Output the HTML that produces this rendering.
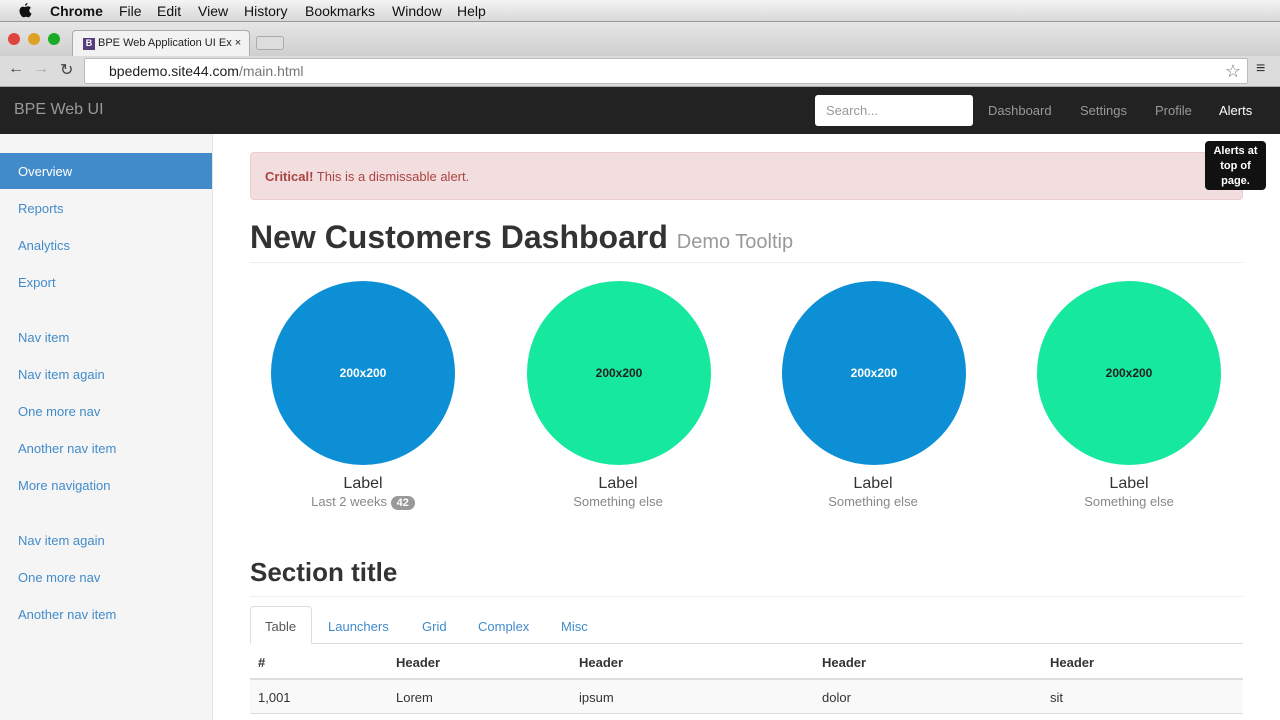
<!DOCTYPE html>
<html><head><style>
*{box-sizing:border-box;margin:0;padding:0}
body{width:1280px;height:720px;overflow:hidden;font-family:"Liberation Sans",Arial,sans-serif;background:#fff;position:relative}
.abs{position:absolute}
.menubar{top:0;left:0;width:1280px;height:22px;background:linear-gradient(#f4f4f4,#d8d8d8);border-bottom:1px solid #999;font-size:14px;color:#111}
.menubar span{position:absolute;top:3px}
.tabbar{top:22px;left:0;width:1280px;height:34px;background:linear-gradient(#e6e6e6,#cfcfcf)}
.toolbar{top:56px;left:0;width:1280px;height:31px;background:#dcdcdc;border-bottom:1px solid #aaa}
.navbar{top:87px;left:0;width:1280px;height:47px;background:#222;}
.side{top:134px;left:0;width:213px;height:586px;background:#f5f5f5;border-right:1px solid #e5e5e5}
.side a{position:absolute;left:18px;font-size:13px;color:#428bca}
.circle{width:184px;height:184px;border-radius:50%;display:flex;align-items:center;justify-content:center;font-size:12px;font-weight:bold}
.lbl{font-size:16px;color:#333;text-align:center;width:200px}
.sub{font-size:13px;color:#888;text-align:center;width:200px}
</style></head><body>
<div class="abs menubar">
<svg class="abs" style="left:18px;top:3px" width="14" height="16" viewBox="0 0 14 16"><path d="M9.5 0c0 1.5-1.2 2.8-2.5 2.8C7 1.3 8.2.1 9.5 0zM7 4c1 0 2-.7 3-.7 1.3 0 2.3.7 2.9 1.6-2.4 1.4-2 4.6.6 5.6-.5 1.5-1.6 3.8-3 3.8-.9 0-1.2-.6-2.4-.6s-1.6.6-2.5.6C4 14.3 1.5 11 1.5 8c0-2.6 1.6-4.4 3.4-4.4C5.8 3.6 6.3 4 7 4z" fill="#111"/></svg>
<span style="left:50px;font-weight:bold">Chrome</span><span style="left:119px">File</span><span style="left:157px">Edit</span><span style="left:198px">View</span><span style="left:244px">History</span><span style="left:305px">Bookmarks</span><span style="left:392px">Window</span><span style="left:457px">Help</span>
</div>
<div class="abs tabbar">
<div class="abs" style="left:8px;top:11px;width:12px;height:12px;border-radius:50%;background:#e0443e"></div>
<div class="abs" style="left:28px;top:11px;width:12px;height:12px;border-radius:50%;background:#dea123"></div>
<div class="abs" style="left:48px;top:11px;width:12px;height:12px;border-radius:50%;background:#1aab29"></div>
<div class="abs" style="left:72px;top:8px;width:178px;height:26px;background:#f2f2f2;border:1px solid #aaa;border-bottom:none;border-radius:4px 4px 0 0;font-size:11px;padding:6px 0 0 10px;color:#222"><span style="display:inline-block;width:12px;height:12px;background:#563d7c;color:#fff;font-size:9px;text-align:center;font-weight:bold;margin-right:3px">B</span>BPE Web Application UI Ex ×</div>
<div class="abs" style="left:256px;top:14px;width:28px;height:14px;border:1px solid #aaa;border-radius:3px;background:#ddd"></div>
</div>
<div class="abs toolbar">
<span class="abs" style="left:8px;top:4px;font-size:16px;color:#444">←</span><span class="abs" style="left:33px;top:4px;font-size:16px;color:#aaa">→</span><span class="abs" style="left:60px;top:4px;font-size:16px;color:#444">↻</span>
<div class="abs" style="left:84px;top:2px;width:1164px;height:26px;background:#fff;border:1px solid #bbb;border-radius:2px;font-size:14px;padding:4px 0 0 24px;color:#222">bpedemo.site44.com<span style="color:#777">/main.html</span><span class="abs" style="right:6px;top:2px;font-size:18px;color:#777">☆</span></div>
<span class="abs" style="left:1256px;top:4px;font-size:16px;color:#333">≡</span>
</div>
<div class="abs navbar">
<span class="abs" style="left:14px;top:14px;font-size:16px;color:#999">BPE Web UI</span>
<div class="abs" style="left:815px;top:8px;width:158px;height:31px;background:#fff;border-radius:3px;font-size:13px;color:#999;padding:8px 0 0 11px">Search...</div>
<span class="abs" style="left:988px;top:16px;font-size:13px;color:#999">Dashboard</span>
<span class="abs" style="left:1080px;top:16px;font-size:13px;color:#999">Settings</span>
<span class="abs" style="left:1155px;top:16px;font-size:13px;color:#999">Profile</span>
<span class="abs" style="left:1219px;top:16px;font-size:13px;color:#fff">Alerts</span>
</div>
<div class="abs" style="left:1205px;top:141px;width:61px;height:49px;background:#111;border-radius:4px;color:#fff;font-size:11px;font-weight:bold;text-align:center;padding-top:3px;line-height:15px;z-index:5">Alerts at<br>top of<br>page.</div>
<div class="abs side">
<div class="abs" style="left:0;top:19px;width:212px;height:36px;background:#428bca"></div>
<a style="top:30px;color:#fff">Overview</a><a style="top:67px">Reports</a><a style="top:104px">Analytics</a><a style="top:141px">Export</a>
<a style="top:196px">Nav item</a><a style="top:233px">Nav item again</a><a style="top:270px">One more nav</a><a style="top:307px">Another nav item</a><a style="top:344px">More navigation</a>
<a style="top:399px">Nav item again</a><a style="top:436px">One more nav</a><a style="top:473px">Another nav item</a>
</div>
<div class="abs" style="left:250px;top:152px;width:993px;height:48px;background:#f2dede;border:1px solid #ebccd1;border-radius:4px;color:#a94442;font-size:13px;padding:16px 0 0 14px"><b>Critical!</b> This is a dismissable alert.</div>
<div class="abs" style="left:250px;top:219px;font-size:32px;font-weight:bold;color:#333;white-space:nowrap">New Customers Dashboard <span style="font-size:20px;font-weight:normal;color:#999">Demo Tooltip</span></div>
<div class="abs" style="left:250px;top:262px;width:993px;border-top:1px solid #eee"></div>
<div class="abs circle" style="left:271px;top:281px;background:#0d8fd6;color:#fff">200x200</div>
<div class="abs circle" style="left:527px;top:281px;background:#16e89e;color:#222">200x200</div>
<div class="abs circle" style="left:782px;top:281px;background:#0d8fd6;color:#fff">200x200</div>
<div class="abs circle" style="left:1037px;top:281px;background:#16e89e;color:#222">200x200</div>
<div class="abs lbl" style="left:263px;top:475px">Label</div><div class="abs sub" style="left:263px;top:494px">Last 2 weeks <span style="background:#999;color:#fff;border-radius:9px;padding:1px 6px;font-size:11px;font-weight:bold">42</span></div>
<div class="abs lbl" style="left:518px;top:475px">Label</div><div class="abs sub" style="left:518px;top:494px">Something else</div>
<div class="abs lbl" style="left:773px;top:475px">Label</div><div class="abs sub" style="left:773px;top:494px">Something else</div>
<div class="abs lbl" style="left:1029px;top:475px">Label</div><div class="abs sub" style="left:1029px;top:494px">Something else</div>
<div class="abs" style="left:250px;top:557px;font-size:26px;font-weight:bold;color:#333">Section title</div>
<div class="abs" style="left:250px;top:596px;width:993px;border-top:1px solid #eee"></div>
<div class="abs" style="left:250px;top:643px;width:993px;border-top:1px solid #ddd"></div>
<div class="abs" style="left:250px;top:606px;width:62px;height:38px;border:1px solid #ddd;border-bottom-color:#fff;border-radius:4px 4px 0 0;background:#fff;font-size:13px;color:#555;padding:12px 0 0 14px">Table</div>
<span class="abs" style="left:328px;top:619px;font-size:13px;color:#428bca">Launchers</span>
<span class="abs" style="left:422px;top:619px;font-size:13px;color:#428bca">Grid</span>
<span class="abs" style="left:478px;top:619px;font-size:13px;color:#428bca">Complex</span>
<span class="abs" style="left:561px;top:619px;font-size:13px;color:#428bca">Misc</span>
<div class="abs" style="top:655px;left:258px;font-size:13px;font-weight:bold;color:#333">#</div>
<div class="abs" style="top:655px;left:396px;font-size:13px;font-weight:bold;color:#333">Header</div>
<div class="abs" style="top:655px;left:579px;font-size:13px;font-weight:bold;color:#333">Header</div>
<div class="abs" style="top:655px;left:822px;font-size:13px;font-weight:bold;color:#333">Header</div>
<div class="abs" style="top:655px;left:1050px;font-size:13px;font-weight:bold;color:#333">Header</div>
<div class="abs" style="left:250px;top:678px;width:993px;height:36px;background:#f9f9f9;border-top:2px solid #ddd;border-bottom:1px solid #ddd"></div>
<div class="abs" style="top:690px;left:258px;font-size:13px;color:#333">1,001</div>
<div class="abs" style="top:690px;left:396px;font-size:13px;color:#333">Lorem</div>
<div class="abs" style="top:690px;left:579px;font-size:13px;color:#333">ipsum</div>
<div class="abs" style="top:690px;left:822px;font-size:13px;color:#333">dolor</div>
<div class="abs" style="top:690px;left:1050px;font-size:13px;color:#333">sit</div>
</body></html>
